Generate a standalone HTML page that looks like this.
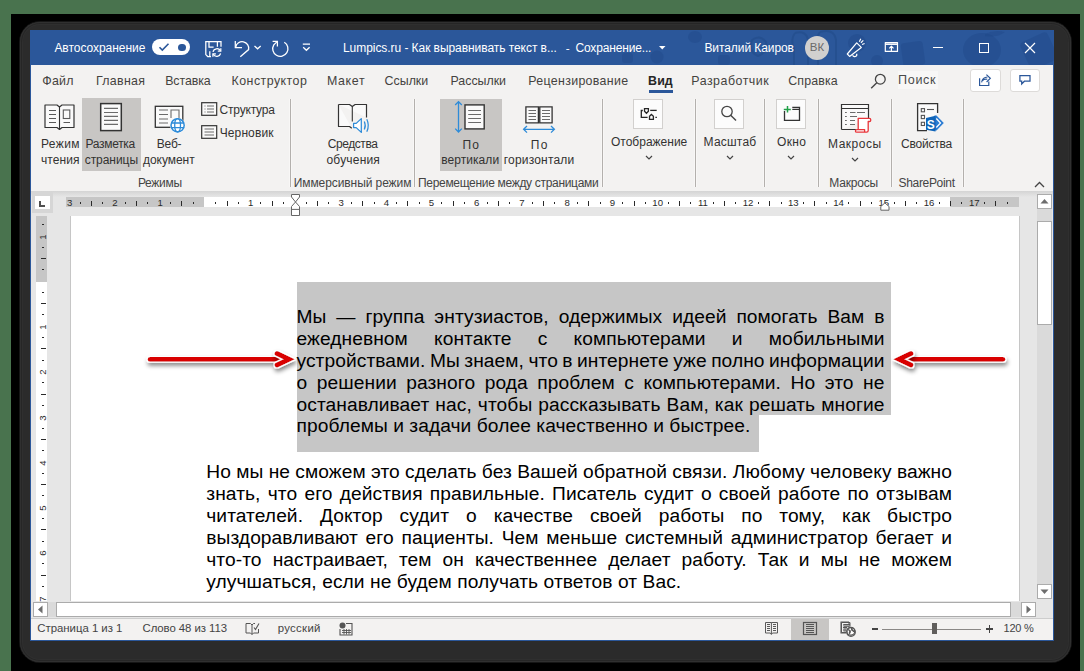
<!DOCTYPE html><html><head><meta charset="utf-8"><style>
html,body{margin:0;padding:0;}
body{width:1084px;height:671px;position:relative;overflow:hidden;background:#49734e;font-family:"Liberation Sans", sans-serif;}
.t{position:absolute;white-space:nowrap;}
.jl{position:absolute;white-space:nowrap;text-align:justify;text-align-last:justify;}
</style></head><body>

<div style="position:absolute;left:11px;top:14px;width:1069px;height:657px;background:#000"></div>
<div style="position:absolute;left:19.5px;top:22px;width:1051.5px;height:640px;background:#2b2b2b;border-radius:20px;box-shadow:inset 0 0 0 1px #303030,inset 0 0 0 2px #262626,inset 0 0 0 3px #2f2f2f,0 0 0 1px #161616"></div>
<div style="position:absolute;left:30px;top:30px;width:1024px;height:611px;background:#2b579a"></div>
<div style="position:absolute;left:31px;top:65px;width:1022px;height:126px;background:#f3f2f1"></div>
<div style="position:absolute;left:31px;top:191px;width:1022px;height:3px;background:linear-gradient(#d6d6d6,#e6e6e6)"></div>
<div style="position:absolute;left:31px;top:194px;width:1022px;height:407px;background:#e6e6e6"></div>
<div style="position:absolute;left:31px;top:618px;width:1022px;height:22px;background:#f3f2f1;border-top:1px solid #cdcdcd;box-sizing:border-box"></div>
<div style="position:absolute;left:31px;top:601px;width:1022px;height:17px;background:#e6e6e6"></div>
<svg style="position:absolute;left:0;top:30px" width="1054" height="35" viewBox="0 30 1054 35"><g fill="#1e4683" fill-opacity="0.35">
<ellipse cx="695" cy="37" rx="7" ry="6"/><circle cx="657" cy="57" r="6.5"/><rect x="622" y="53" width="11" height="10" rx="3"/>
<rect x="718" y="55" width="12" height="10" rx="3"/><circle cx="857" cy="43" r="9"/><circle cx="877" cy="61" r="6"/>
<rect x="902" y="42" width="22" height="24" rx="3" transform="rotate(-8 913 54)"/><ellipse cx="982" cy="50" rx="19" ry="17"/><path d="M985 34 Q995 29 1005 32 Q997 38 985 36 Z"/><rect x="1024" y="36" width="30" height="30" rx="4" transform="rotate(-25 1039 51)"/>
</g><g fill="none" stroke="#1e4683" stroke-opacity="0.4" stroke-width="2">
<path d="M752 40 Q760 34 766 42 Q768 52 758 56 Q748 52 752 40 Z"/><path d="M795 33 Q806 30 808 40 V65 M795 33 Q790 40 794 48 V65"/>
<path d="M820 32 Q834 28 836 40 V65 M820 32 Q814 40 818 48 V65"/>
</g></svg>
<div class="t" style="left:54.40px;top:41.14px;font-size:12px;line-height:14.4px;color:#ffffff;font-weight:normal;letter-spacing:-0.038px">Автосохранение</div>
<div style="position:absolute;left:152px;top:39px;width:38px;height:16px;background:#fff;border-radius:8px"></div>
<svg style="position:absolute;left:158px;top:42px;" width="12" height="10" viewBox="0 0 12 10"><path d="M1.5 5.2 L4.3 8 L10.5 1.8" fill="none" stroke="#2b579a" stroke-width="1.6"/></svg>
<div style="position:absolute;left:178px;top:43.5px;width:7.5px;height:7.5px;background:#2b579a;border-radius:50%"></div>
<svg style="position:absolute;left:0;top:0" width="330" height="66" viewBox="0 0 330 66"><g fill="none" stroke="#fff" stroke-width="1.25">
<path d="M221 46.8 V41.6 H205.8 V54.6 L207.7 56.5 H211"/>
<path d="M209 41.6 V47 H213.6 M217.4 41.6 V46.8 M209.8 51.3 V56.5"/>
<path d="M213 51.8 A4 4 0 0 1 220.4 50.8 M220.6 53.4 A4 4 0 0 1 213.2 54.3"/>
<path d="M220.8 48.2 V51.2 H217.8 M212.9 56.8 V53.8 H215.9"/>
<path d="M235.3 41 V47.5 H242"/>
<path d="M235.7 47 A6.3 6.3 0 0 1 248.6 49.6 L240.3 56.7" stroke-width="1.3"/>
<path d="M254.5 46 L257.6 48.8 L260.7 46"/>
<path d="M284.3 42.2 A7.6 7.6 0 1 1 273.8 44.8 L277.4 41.4" stroke-width="1.3"/>
<path d="M272.6 41.4 H277.4 V46.6"/>
<path d="M302.8 44.2 H310 M303.2 47.2 L306.4 50.3 L309.6 47.2"/>
</g></svg>
<div class="t" style="left:343.00px;top:41.14px;font-size:12px;line-height:14.4px;color:#ffffff;font-weight:normal;letter-spacing:-0.058px">Lumpics.ru - Как выравнивать текст в...</div>
<div class="t" style="left:565.80px;top:41.36px;font-size:11.77px;line-height:14.12px;color:#ffffff;font-weight:normal;">-</div>
<div class="t" style="left:575.40px;top:41.14px;font-size:12px;line-height:14.4px;color:#ffffff;font-weight:normal;letter-spacing:-0.150px">Сохранение...</div>
<svg style="position:absolute;left:658.5px;top:45.5px;" width="7" height="4" viewBox="0 0 7 4"><path d="M0 0 H6.5 L3.25 3.5 Z" fill="#fff"/></svg>
<div class="t" style="left:704.40px;top:41.14px;font-size:12px;line-height:14.4px;color:#ffffff;font-weight:normal;letter-spacing:-0.077px">Виталий Каиров</div>
<div style="position:absolute;left:805px;top:36px;width:24px;height:24px;background:#d1d0cf;border-radius:50%"></div>
<div class="t" style="left:805.00px;top:41.41px;width:24px;text-align:center;font-size:11.5px;line-height:13.8px;color:#6a6a6a;">ВК</div>
<svg style="position:absolute;left:800px;top:30px" width="110" height="35" viewBox="800 30 110 35"><g fill="none" stroke="#fff" stroke-width="1.2" stroke-linejoin="round">
<path d="M847.3 54 L856.7 42.8 L861.3 47.4 L849.6 56.4 Z"/>
<path d="M852.6 55.3 A2.1 2.1 0 0 0 856.6 53.7"/>
<path d="M859.3 41.8 L860.8 38.8 M862 44.5 L864.6 43.5 M860.9 42.7 L863.3 40.4"/>
<rect x="885.3" y="42.6" width="12.2" height="8.8"/>
<path d="M885.3 44.2 H897.5" stroke-width="1.5"/>
<path d="M891.4 51.4 V46.3 M889.3 48.3 L891.4 46.2 L893.5 48.3"/>
</g></svg>
<div style="position:absolute;left:933px;top:47px;width:10px;height:1px;background:#fff"></div>
<div style="position:absolute;left:979px;top:42.5px;width:10px;height:10px;border:1px solid #fff;box-sizing:border-box"></div>
<svg style="position:absolute;left:1024px;top:42px;" width="12" height="12" viewBox="0 0 12 12"><path d="M1 1 L11 11 M11 1 L1 11" stroke="#fff" stroke-width="1.2"/></svg>
<div class="t" style="left:42.30px;top:73.86px;font-size:12.4px;line-height:14.88px;color:#444240;font-weight:normal;letter-spacing:0.233px">Файл</div>
<div class="t" style="left:96.00px;top:73.86px;font-size:12.4px;line-height:14.88px;color:#444240;font-weight:normal;letter-spacing:0.300px">Главная</div>
<div class="t" style="left:165.20px;top:73.86px;font-size:12.4px;line-height:14.88px;color:#444240;font-weight:normal;letter-spacing:-0.083px">Вставка</div>
<div class="t" style="left:231.60px;top:73.86px;font-size:12.4px;line-height:14.88px;color:#444240;font-weight:normal;letter-spacing:0.460px">Конструктор</div>
<div class="t" style="left:327.00px;top:73.86px;font-size:12.4px;line-height:14.88px;color:#444240;font-weight:normal;letter-spacing:0.625px">Макет</div>
<div class="t" style="left:384.60px;top:73.86px;font-size:12.4px;line-height:14.88px;color:#444240;font-weight:normal;letter-spacing:0.000px">Ссылки</div>
<div class="t" style="left:450.50px;top:73.86px;font-size:12.4px;line-height:14.88px;color:#444240;font-weight:normal;letter-spacing:-0.014px">Рассылки</div>
<div class="t" style="left:528.30px;top:73.86px;font-size:12.4px;line-height:14.88px;color:#444240;font-weight:normal;letter-spacing:0.315px">Рецензирование</div>
<div class="t" style="left:691.30px;top:73.86px;font-size:12.4px;line-height:14.88px;color:#444240;font-weight:normal;letter-spacing:0.510px">Разработчик</div>
<div class="t" style="left:788.30px;top:73.86px;font-size:12.4px;line-height:14.88px;color:#444240;font-weight:normal;letter-spacing:0.117px">Справка</div>
<div class="t" style="left:648.10px;top:73.86px;font-size:12.4px;line-height:14.88px;color:#262626;font-weight:bold;letter-spacing:0.100px">Вид</div>
<div style="position:absolute;left:649px;top:90px;width:24px;height:3px;background:#2b579a"></div>
<svg style="position:absolute;left:870px;top:73px;" width="17" height="16" viewBox="0 0 17 16"><circle cx="10.3" cy="6.2" r="4.9" fill="none" stroke="#444" stroke-width="1.3"/><path d="M6.8 9.7 L1.2 15.2" stroke="#444" stroke-width="1.4"/></svg>
<div style="position:absolute;left:898px;top:71px;width:40px;height:18px;background:#f8f7f6"></div>
<div class="t" style="left:898.00px;top:73.37px;font-size:12.6px;line-height:15.12px;color:#4a4a4a;font-weight:normal;letter-spacing:0.675px">Поиск</div>
<div style="position:absolute;left:970px;top:68.5px;width:30.5px;height:23px;background:#fff;border:1px solid #dddbd9;border-radius:3px;box-sizing:border-box"></div>
<div style="position:absolute;left:1009.5px;top:68.5px;width:30.5px;height:23px;background:#fff;border:1px solid #dddbd9;border-radius:3px;box-sizing:border-box"></div>
<svg style="position:absolute;left:970px;top:68px" width="75" height="24" viewBox="970 68 75 24"><g fill="none" stroke="#2b579a" stroke-width="1.2"><path d="M979.6 78.3 V85.5 H988.8 V81.6"/><path d="M981.6 82.3 Q982.5 77.3 987.5 77 M982.5 80.8 Q984 78.7 987.3 79.2" stroke-width="1.1"/><path d="M986.4 74.6 L990.3 78.3 L986.6 82" stroke-width="1.2"/></g><g fill="none" stroke="#2b579a" stroke-width="1.25" stroke-linejoin="miter"><path d="M1019.9 75.6 H1030 V81.2 H1024.4 L1021.7 84 V81.2 H1019.9 Z"/></g></svg>
<div style="position:absolute;left:289px;top:99px;width:3px;height:88px;background:linear-gradient(90deg,#f8f7f6 0,#f8f7f6 33%,#b3b0ad 33%,#b3b0ad 67%,#f8f7f6 67%)"></div>
<div style="position:absolute;left:413px;top:99px;width:3px;height:88px;background:linear-gradient(90deg,#f8f7f6 0,#f8f7f6 33%,#b3b0ad 33%,#b3b0ad 67%,#f8f7f6 67%)"></div>
<div style="position:absolute;left:601px;top:99px;width:3px;height:88px;background:linear-gradient(90deg,#f8f7f6 0,#f8f7f6 33%,#b3b0ad 33%,#b3b0ad 67%,#f8f7f6 67%)"></div>
<div style="position:absolute;left:694px;top:99px;width:3px;height:88px;background:linear-gradient(90deg,#f8f7f6 0,#f8f7f6 33%,#b3b0ad 33%,#b3b0ad 67%,#f8f7f6 67%)"></div>
<div style="position:absolute;left:763px;top:99px;width:3px;height:88px;background:linear-gradient(90deg,#f8f7f6 0,#f8f7f6 33%,#b3b0ad 33%,#b3b0ad 67%,#f8f7f6 67%)"></div>
<div style="position:absolute;left:817px;top:99px;width:3px;height:88px;background:linear-gradient(90deg,#f8f7f6 0,#f8f7f6 33%,#b3b0ad 33%,#b3b0ad 67%,#f8f7f6 67%)"></div>
<div style="position:absolute;left:890px;top:99px;width:3px;height:88px;background:linear-gradient(90deg,#f8f7f6 0,#f8f7f6 33%,#b3b0ad 33%,#b3b0ad 67%,#f8f7f6 67%)"></div>
<div style="position:absolute;left:962px;top:99px;width:3px;height:88px;background:linear-gradient(90deg,#f8f7f6 0,#f8f7f6 33%,#b3b0ad 33%,#b3b0ad 67%,#f8f7f6 67%)"></div>
<div style="position:absolute;left:82px;top:98px;width:59px;height:73px;background:#c8c6c4"></div>
<div style="position:absolute;left:440px;top:98.5px;width:62px;height:72.5px;background:#c8c6c4"></div>
<svg style="position:absolute;left:44px;top:104px;" width="31" height="27" viewBox="0 0 31 27"><path d="M1 1 H13 L15.5 3 L18 1 H30 V23.5 H18 L15.5 25.5 L13 23.5 H1 Z" fill="#fafafa" stroke="#333" stroke-width="1.2" stroke-linejoin="round"/><path d="M15.5 3 V25" stroke="#333" stroke-width="1.1"/><path d="M5 6.5 H12 M5 10.5 H12 M5 14.5 H12 M5 18.5 H12 M19.5 18.5 H26" stroke="#5a5a5a" stroke-width="1.1"/><rect x="19.3" y="6" width="6.5" height="8.5" fill="none" stroke="#5a5a5a" stroke-width="1.1"/></svg>
<div class="t" style="left:40.90px;top:137.14px;font-size:12px;line-height:14.4px;color:#333231;font-weight:normal;letter-spacing:0.425px">Режим</div>
<div class="t" style="left:40.90px;top:152.84px;font-size:12px;line-height:14.4px;color:#333231;font-weight:normal;letter-spacing:0.100px">чтения</div>
<svg style="position:absolute;left:99px;top:102px;" width="24" height="30" viewBox="0 0 24 30"><rect x="1.7" y="1.6" width="20.6" height="27" fill="#fafafa" stroke="#333" stroke-width="1.5"/><path d="M5 6.4 H19 M5 10.5 H19 M5 14.4 H19 M5 18.4 H19 M5 22.4 H19" stroke="#6b6b6b" stroke-width="1.1"/></svg>
<div class="t" style="left:85.50px;top:137.14px;font-size:12px;line-height:14.4px;color:#333231;font-weight:normal;letter-spacing:-0.300px">Разметка</div>
<div class="t" style="left:84.70px;top:152.84px;font-size:12px;line-height:14.4px;color:#333231;font-weight:normal;letter-spacing:-0.043px">страницы</div>
<svg style="position:absolute;left:154px;top:105px;" width="32" height="30" viewBox="0 0 32 30"><rect x="1.3" y="1.3" width="27.5" height="21" fill="#fafafa" stroke="#333" stroke-width="1.3"/><path d="M5 5 H14 M5 9.5 H14 M5 14 H14 M5 18 H14" stroke="#6b6b6b" stroke-width="1.1"/><path d="M17 13 V5 H25 V13" fill="none" stroke="#6b6b6b" stroke-width="1.1"/><circle cx="23.6" cy="20.3" r="7.6" fill="#fff"/><circle cx="23.6" cy="20.3" r="6.6" fill="none" stroke="#2e8bd8" stroke-width="1.5"/><ellipse cx="23.6" cy="20.3" rx="2.9" ry="6.6" fill="none" stroke="#2e8bd8" stroke-width="1.3"/><path d="M17 18 H30.2 M17 22.6 H30.2" stroke="#2e8bd8" stroke-width="1.3"/></svg>
<div class="t" style="left:156.70px;top:137.14px;font-size:12px;line-height:14.4px;color:#333231;font-weight:normal;letter-spacing:-0.167px">Веб-</div>
<div class="t" style="left:143.00px;top:152.84px;font-size:12px;line-height:14.4px;color:#333231;font-weight:normal;letter-spacing:-0.043px">документ</div>
<svg style="position:absolute;left:201px;top:102px;" width="17" height="15" viewBox="0 0 17 15"><rect x="0.7" y="0.7" width="15" height="12.6" fill="#fafafa" stroke="#333" stroke-width="1.2"/><path d="M3.5 4 H4.5 M3.5 7 H4.5 M3.5 10 H4.5 M6 4 H13 M6 7 H13 M6 10 H13" stroke="#6b6b6b" stroke-width="1.1"/></svg>
<div class="t" style="left:219.60px;top:103.04px;font-size:12px;line-height:14.4px;color:#333231;font-weight:normal;letter-spacing:-0.200px">Структура</div>
<svg style="position:absolute;left:201px;top:125px;" width="17" height="15" viewBox="0 0 17 15"><rect x="0.7" y="0.7" width="15" height="12.6" fill="#fafafa" stroke="#333" stroke-width="1.2"/><path d="M3.5 4 H13 M3.5 7 H13 M3.5 10 H13" stroke="#6b6b6b" stroke-width="1.1"/></svg>
<div class="t" style="left:219.70px;top:125.84px;font-size:12px;line-height:14.4px;color:#333231;font-weight:normal;letter-spacing:0.114px">Черновик</div>
<div class="t" style="left:137.90px;top:175.94px;font-size:12px;line-height:14.4px;color:#444;font-weight:normal;letter-spacing:-0.280px">Режимы</div>
<svg style="position:absolute;left:330px;top:98px" width="45" height="40" viewBox="330 98 45 40"><path d="M338.5 104.5 H349.5 L352.3 106.6 L355.1 104.5 H366.5 V117.5 M338.5 104.5 V126.5 H349.5 L351.8 128.3" fill="#fafafa" stroke="#333" stroke-width="1.2" stroke-linejoin="round"/><path d="M352.3 106.6 V121.5" stroke="#333" stroke-width="1.1"/><path d="M353.6 123.4 H356.2 L361.3 118.6 V132.4 L356.2 127.6 H353.6 Z" fill="#fff" stroke="#2e8bd8" stroke-width="1.25" stroke-linejoin="round"/><path d="M364.3 121.5 Q366.2 125.5 364.3 129.5 M366.8 119.3 Q369.8 125.5 366.8 131.7" fill="none" stroke="#2e8bd8" stroke-width="1.2"/></svg>
<div class="t" style="left:327.80px;top:137.14px;font-size:12px;line-height:14.4px;color:#333231;font-weight:normal;letter-spacing:-0.443px">Средства</div>
<div class="t" style="left:326.50px;top:152.84px;font-size:12px;line-height:14.4px;color:#333231;font-weight:normal;letter-spacing:0.186px">обучения</div>
<div class="t" style="left:293.70px;top:175.94px;font-size:12px;line-height:14.4px;color:#444;font-weight:normal;letter-spacing:-0.081px">Иммерсивный режим</div>
<svg style="position:absolute;left:445px;top:98px" width="50" height="38" viewBox="445 98 50 38"><path d="M458.5 101.8 V131.8 M455.2 105 L458.5 101.6 L461.8 105 M455.2 128.6 L458.5 132 L461.8 128.6" fill="none" stroke="#2e8bd8" stroke-width="1.3"/><rect x="465" y="104.9" width="19.2" height="24" fill="#fafafa" stroke="#333" stroke-width="1.4"/><path d="M468.2 110.5 H481 M468.2 114.5 H481 M468.2 118.5 H481 M468.2 122.5 H481" stroke="#6b6b6b" stroke-width="1.1"/></svg>
<div class="t" style="left:462.40px;top:137.84px;font-size:12px;line-height:14.4px;color:#333231;font-weight:normal;letter-spacing:1.300px">По</div>
<div class="t" style="left:441.20px;top:153.44px;font-size:12px;line-height:14.4px;color:#333231;font-weight:normal;letter-spacing:0.062px">вертикали</div>
<svg style="position:absolute;left:518px;top:100px" width="42" height="36" viewBox="518 100 42 36"><path d="M525.9 106.9 H538.4 V122.9 H525.9 Z M539.8 106.9 H552.1 V122.9 H539.8 Z" fill="#fafafa" stroke="#333" stroke-width="1.3"/><path d="M528.5 110.5 H536 M528.5 113.5 H536 M528.5 116.5 H536 M528.5 119.5 H536 M542 110.5 H550 M542 113.5 H550 M542 116.5 H550 M542 119.5 H550" stroke="#6b6b6b" stroke-width="1"/><path d="M523.8 129.3 H554.2 M527 126 L523.6 129.3 L527 132.6 M551 126 L554.4 129.3 L551 132.6" fill="none" stroke="#2e8bd8" stroke-width="1.3"/></svg>
<div class="t" style="left:530.70px;top:137.84px;font-size:12px;line-height:14.4px;color:#333231;font-weight:normal;letter-spacing:1.500px">По</div>
<div class="t" style="left:503.80px;top:153.44px;font-size:12px;line-height:14.4px;color:#333231;font-weight:normal;letter-spacing:0.180px">горизонтали</div>
<div class="t" style="left:418.00px;top:175.94px;font-size:12px;line-height:14.4px;color:#444;font-weight:normal;letter-spacing:-0.315px">Перемещение между страницами</div>
<div style="position:absolute;left:633px;top:99px;width:30px;height:30px;background:#fcfcfc;border:1px solid #d2d0ce;box-sizing:border-box"></div>
<svg style="position:absolute;left:633px;top:99px;" width="30" height="30" viewBox="0 0 30 30"><g fill="none" stroke="#262626" stroke-width="1.3"><path d="M9.8 11.5 H8.3 V18.3 H14.6"/><path d="M11.5 9.6 H15.4 V12.3 L13.45 14.3 L11.5 12.3 Z"/><path d="M17.2 11.4 H23.7"/><path d="M16.5 20.4 V17.3 L18.4 15.5 L20.4 17.3 V20.4 Z"/><path d="M22.4 18.3 H23.9"/></g></svg>
<div class="t" style="left:611.00px;top:134.84px;font-size:12px;line-height:14.4px;color:#333231;font-weight:normal;letter-spacing:0.000px">Отображение</div>
<svg style="position:absolute;left:645px;top:155px;" width="8" height="5" viewBox="0 0 8 5"><path d="M1 1 L4 4 L7 1" fill="none" stroke="#444" stroke-width="1.2"/></svg>
<div style="position:absolute;left:714px;top:99px;width:30px;height:30px;background:#fcfcfc;border:1px solid #d2d0ce;box-sizing:border-box"></div>
<svg style="position:absolute;left:714px;top:99px;" width="30" height="30" viewBox="0 0 30 30"><circle cx="13" cy="12.5" r="5.2" fill="none" stroke="#444" stroke-width="1.3"/><path d="M16.7 16.2 L22 21.5" stroke="#444" stroke-width="1.4"/></svg>
<div class="t" style="left:703.60px;top:134.84px;font-size:12px;line-height:14.4px;color:#333231;font-weight:normal;letter-spacing:0.200px">Масштаб</div>
<svg style="position:absolute;left:726px;top:155px;" width="8" height="5" viewBox="0 0 8 5"><path d="M1 1 L4 4 L7 1" fill="none" stroke="#444" stroke-width="1.2"/></svg>
<div style="position:absolute;left:776px;top:99px;width:30px;height:30px;background:#fcfcfc;border:1px solid #d2d0ce;box-sizing:border-box"></div>
<svg style="position:absolute;left:776px;top:99px;" width="30" height="30" viewBox="0 0 30 30"><g fill="none" stroke="#333" stroke-width="1.3"><path d="M8.5 12.1 V21.4 H23.5 V8.3 H16.3 M16.3 10.4 H23.5"/></g><path d="M11.5 6.9 V13.6 M7.8 10.4 H14.8" stroke="#21a148" stroke-width="1.5"/></svg>
<div class="t" style="left:777.00px;top:134.84px;font-size:12px;line-height:14.4px;color:#333231;font-weight:normal;letter-spacing:0.333px">Окно</div>
<svg style="position:absolute;left:787px;top:155px;" width="8" height="5" viewBox="0 0 8 5"><path d="M1 1 L4 4 L7 1" fill="none" stroke="#444" stroke-width="1.2"/></svg>
<svg style="position:absolute;left:835px;top:100px" width="40" height="36" viewBox="835 100 40 36"><path d="M841.5 129.5 V104.5 H868.5 V118 M841.5 129.5 H856" fill="#fafafa" stroke="#333" stroke-width="1.2"/><path d="M841.5 108.5 H868.5" stroke="#333" stroke-width="1"/><path d="M845 112.5 H846.8 M850 112.5 H855.5 M857 112.5 H865 M845 116.5 H846.8 M850 116.5 H857 M845 120.5 H846.8 M850 120.5 H855 M845 124.5 H846.8 M850 124.5 H855" stroke="#6b6b6b" stroke-width="1.1"/><path d="M858.2 130 V118.3 H869.3 Q870.8 118.3 870.8 119.9 Q870.8 121.5 869.3 121.5 H868.2 V130.6 Q868.2 132.2 866.6 132.2 H856.9 Q855.4 132.2 855.4 130.9 Q855.4 129.6 856.9 129.6 H864.6 V132" fill="#fff" stroke="#e8353a" stroke-width="1.3" stroke-linejoin="round"/></svg>
<div class="t" style="left:828.00px;top:137.04px;font-size:12px;line-height:14.4px;color:#333231;font-weight:normal;letter-spacing:0.500px">Макросы</div>
<svg style="position:absolute;left:851px;top:157px;" width="8" height="5" viewBox="0 0 8 5"><path d="M1 1 L4 4 L7 1" fill="none" stroke="#444" stroke-width="1.2"/></svg>
<div class="t" style="left:829.30px;top:175.64px;font-size:12px;line-height:14.4px;color:#444;font-weight:normal;letter-spacing:-0.183px">Макросы</div>
<svg style="position:absolute;left:912px;top:100px" width="36" height="36" viewBox="912 100 36 36"><path d="M937.6 113 V103.7 H917.6 V130.6 H927" fill="#fafafa" stroke="#333" stroke-width="1.3"/><g fill="none" stroke="#555" stroke-width="1.1"><rect x="921.3" y="108.6" width="3.2" height="3.2"/><rect x="921.3" y="115.4" width="3.2" height="3.2"/><rect x="921.3" y="122.3" width="3.2" height="3.2"/><path d="M927 109.5 H934"/></g><path d="M934.5 115.5 H936.5 L943.8 123 L936.5 130.6 H934.5 Z" fill="#2b7cd3"/><path d="M936.3 118.5 L940.5 123 L936.3 127.5" fill="none" stroke="#fff" stroke-width="1.2"/><path d="M926 118 L935.5 115.8 V131.4 L926 129.8 Z" fill="#0f64b8"/><text x="930.8" y="128.8" font-family="Liberation Sans" font-weight="bold" font-size="12" fill="#fff" text-anchor="middle">S</text></svg>
<div class="t" style="left:901.00px;top:136.84px;font-size:12px;line-height:14.4px;color:#333231;font-weight:normal;letter-spacing:-0.200px">Свойства</div>
<div class="t" style="left:898.50px;top:175.94px;font-size:12px;line-height:14.4px;color:#444;font-weight:normal;letter-spacing:-0.322px">SharePoint</div>
<svg style="position:absolute;left:1034px;top:181px;" width="11" height="7" viewBox="0 0 11 7"><path d="M1 6 L5.5 1.5 L10 6" fill="none" stroke="#444" stroke-width="1.3"/></svg>
<div style="position:absolute;left:31px;top:191px;width:1022px;height:6px;background:linear-gradient(#d4d4d4,#e6e6e6)"></div>
<div style="position:absolute;left:66px;top:196.7px;width:953px;height:10.3px;background:#fff"></div>
<div style="position:absolute;left:66px;top:196.7px;width:138.2px;height:10.3px;background:#c6c6c6"></div>
<div style="position:absolute;left:949.5px;top:196.7px;width:69.5px;height:10.3px;background:#c6c6c6"></div>
<div class="t" style="left:57.72px;top:197.01px;width:24px;text-align:center;font-size:9.6px;line-height:11.52px;color:#2a2a2a;">3</div>
<div style="position:absolute;left:79.5px;top:202px;width:1.1px;height:2px;background:#2a2a2a"></div>
<div style="position:absolute;left:102.1px;top:202px;width:1.1px;height:2px;background:#2a2a2a"></div>
<div style="position:absolute;left:90.8px;top:201px;width:1.1px;height:5px;background:#2a2a2a"></div>
<div class="t" style="left:102.95px;top:197.01px;width:24px;text-align:center;font-size:9.6px;line-height:11.52px;color:#2a2a2a;">2</div>
<div style="position:absolute;left:124.8px;top:202px;width:1.1px;height:2px;background:#2a2a2a"></div>
<div style="position:absolute;left:147.4px;top:202px;width:1.1px;height:2px;background:#2a2a2a"></div>
<div style="position:absolute;left:136.1px;top:201px;width:1.1px;height:5px;background:#2a2a2a"></div>
<div class="t" style="left:148.18px;top:197.01px;width:24px;text-align:center;font-size:9.6px;line-height:11.52px;color:#2a2a2a;">1</div>
<div style="position:absolute;left:170.0px;top:202px;width:1.1px;height:2px;background:#2a2a2a"></div>
<div style="position:absolute;left:192.6px;top:202px;width:1.1px;height:2px;background:#2a2a2a"></div>
<div style="position:absolute;left:181.3px;top:201px;width:1.1px;height:5px;background:#2a2a2a"></div>
<div style="position:absolute;left:215.2px;top:202px;width:1.1px;height:2px;background:#2a2a2a"></div>
<div style="position:absolute;left:237.8px;top:202px;width:1.1px;height:2px;background:#2a2a2a"></div>
<div style="position:absolute;left:226.5px;top:201px;width:1.1px;height:5px;background:#2a2a2a"></div>
<div class="t" style="left:238.62px;top:197.01px;width:24px;text-align:center;font-size:9.6px;line-height:11.52px;color:#2a2a2a;">1</div>
<div style="position:absolute;left:260.4px;top:202px;width:1.1px;height:2px;background:#2a2a2a"></div>
<div style="position:absolute;left:283.0px;top:202px;width:1.1px;height:2px;background:#2a2a2a"></div>
<div style="position:absolute;left:271.7px;top:201px;width:1.1px;height:5px;background:#2a2a2a"></div>
<div style="position:absolute;left:305.7px;top:202px;width:1.1px;height:2px;background:#2a2a2a"></div>
<div style="position:absolute;left:328.3px;top:202px;width:1.1px;height:2px;background:#2a2a2a"></div>
<div style="position:absolute;left:317.0px;top:201px;width:1.1px;height:5px;background:#2a2a2a"></div>
<div class="t" style="left:329.08px;top:197.01px;width:24px;text-align:center;font-size:9.6px;line-height:11.52px;color:#2a2a2a;">3</div>
<div style="position:absolute;left:350.9px;top:202px;width:1.1px;height:2px;background:#2a2a2a"></div>
<div style="position:absolute;left:373.5px;top:202px;width:1.1px;height:2px;background:#2a2a2a"></div>
<div style="position:absolute;left:362.2px;top:201px;width:1.1px;height:5px;background:#2a2a2a"></div>
<div class="t" style="left:374.30px;top:197.01px;width:24px;text-align:center;font-size:9.6px;line-height:11.52px;color:#2a2a2a;">4</div>
<div style="position:absolute;left:396.1px;top:202px;width:1.1px;height:2px;background:#2a2a2a"></div>
<div style="position:absolute;left:418.7px;top:202px;width:1.1px;height:2px;background:#2a2a2a"></div>
<div style="position:absolute;left:407.4px;top:201px;width:1.1px;height:5px;background:#2a2a2a"></div>
<div class="t" style="left:419.52px;top:197.01px;width:24px;text-align:center;font-size:9.6px;line-height:11.52px;color:#2a2a2a;">5</div>
<div style="position:absolute;left:441.3px;top:202px;width:1.1px;height:2px;background:#2a2a2a"></div>
<div style="position:absolute;left:463.9px;top:202px;width:1.1px;height:2px;background:#2a2a2a"></div>
<div style="position:absolute;left:452.6px;top:201px;width:1.1px;height:5px;background:#2a2a2a"></div>
<div class="t" style="left:464.75px;top:197.01px;width:24px;text-align:center;font-size:9.6px;line-height:11.52px;color:#2a2a2a;">6</div>
<div style="position:absolute;left:486.6px;top:202px;width:1.1px;height:2px;background:#2a2a2a"></div>
<div style="position:absolute;left:509.2px;top:202px;width:1.1px;height:2px;background:#2a2a2a"></div>
<div style="position:absolute;left:497.9px;top:201px;width:1.1px;height:5px;background:#2a2a2a"></div>
<div class="t" style="left:509.98px;top:197.01px;width:24px;text-align:center;font-size:9.6px;line-height:11.52px;color:#2a2a2a;">7</div>
<div style="position:absolute;left:531.8px;top:202px;width:1.1px;height:2px;background:#2a2a2a"></div>
<div style="position:absolute;left:554.4px;top:202px;width:1.1px;height:2px;background:#2a2a2a"></div>
<div style="position:absolute;left:543.1px;top:201px;width:1.1px;height:5px;background:#2a2a2a"></div>
<div class="t" style="left:555.20px;top:197.01px;width:24px;text-align:center;font-size:9.6px;line-height:11.52px;color:#2a2a2a;">8</div>
<div style="position:absolute;left:577.0px;top:202px;width:1.1px;height:2px;background:#2a2a2a"></div>
<div style="position:absolute;left:599.6px;top:202px;width:1.1px;height:2px;background:#2a2a2a"></div>
<div style="position:absolute;left:588.3px;top:201px;width:1.1px;height:5px;background:#2a2a2a"></div>
<div class="t" style="left:600.43px;top:197.01px;width:24px;text-align:center;font-size:9.6px;line-height:11.52px;color:#2a2a2a;">9</div>
<div style="position:absolute;left:622.2px;top:202px;width:1.1px;height:2px;background:#2a2a2a"></div>
<div style="position:absolute;left:644.8px;top:202px;width:1.1px;height:2px;background:#2a2a2a"></div>
<div style="position:absolute;left:633.5px;top:201px;width:1.1px;height:5px;background:#2a2a2a"></div>
<div class="t" style="left:645.65px;top:197.01px;width:24px;text-align:center;font-size:9.6px;line-height:11.52px;color:#2a2a2a;">10</div>
<div style="position:absolute;left:667.5px;top:202px;width:1.1px;height:2px;background:#2a2a2a"></div>
<div style="position:absolute;left:690.1px;top:202px;width:1.1px;height:2px;background:#2a2a2a"></div>
<div style="position:absolute;left:678.8px;top:201px;width:1.1px;height:5px;background:#2a2a2a"></div>
<div class="t" style="left:690.88px;top:197.01px;width:24px;text-align:center;font-size:9.6px;line-height:11.52px;color:#2a2a2a;">11</div>
<div style="position:absolute;left:712.7px;top:202px;width:1.1px;height:2px;background:#2a2a2a"></div>
<div style="position:absolute;left:735.3px;top:202px;width:1.1px;height:2px;background:#2a2a2a"></div>
<div style="position:absolute;left:724.0px;top:201px;width:1.1px;height:5px;background:#2a2a2a"></div>
<div class="t" style="left:736.10px;top:197.01px;width:24px;text-align:center;font-size:9.6px;line-height:11.52px;color:#2a2a2a;">12</div>
<div style="position:absolute;left:757.9px;top:202px;width:1.1px;height:2px;background:#2a2a2a"></div>
<div style="position:absolute;left:780.5px;top:202px;width:1.1px;height:2px;background:#2a2a2a"></div>
<div style="position:absolute;left:769.2px;top:201px;width:1.1px;height:5px;background:#2a2a2a"></div>
<div class="t" style="left:781.33px;top:197.01px;width:24px;text-align:center;font-size:9.6px;line-height:11.52px;color:#2a2a2a;">13</div>
<div style="position:absolute;left:803.1px;top:202px;width:1.1px;height:2px;background:#2a2a2a"></div>
<div style="position:absolute;left:825.7px;top:202px;width:1.1px;height:2px;background:#2a2a2a"></div>
<div style="position:absolute;left:814.4px;top:201px;width:1.1px;height:5px;background:#2a2a2a"></div>
<div class="t" style="left:826.55px;top:197.01px;width:24px;text-align:center;font-size:9.6px;line-height:11.52px;color:#2a2a2a;">14</div>
<div style="position:absolute;left:848.4px;top:202px;width:1.1px;height:2px;background:#2a2a2a"></div>
<div style="position:absolute;left:871.0px;top:202px;width:1.1px;height:2px;background:#2a2a2a"></div>
<div style="position:absolute;left:859.7px;top:201px;width:1.1px;height:5px;background:#2a2a2a"></div>
<div class="t" style="left:871.77px;top:197.01px;width:24px;text-align:center;font-size:9.6px;line-height:11.52px;color:#2a2a2a;">15</div>
<div style="position:absolute;left:893.6px;top:202px;width:1.1px;height:2px;background:#2a2a2a"></div>
<div style="position:absolute;left:916.2px;top:202px;width:1.1px;height:2px;background:#2a2a2a"></div>
<div style="position:absolute;left:904.9px;top:201px;width:1.1px;height:5px;background:#2a2a2a"></div>
<div class="t" style="left:917.00px;top:197.01px;width:24px;text-align:center;font-size:9.6px;line-height:11.52px;color:#2a2a2a;">16</div>
<div style="position:absolute;left:938.8px;top:202px;width:1.1px;height:2px;background:#2a2a2a"></div>
<div style="position:absolute;left:961.4px;top:202px;width:1.1px;height:2px;background:#2a2a2a"></div>
<div style="position:absolute;left:950.1px;top:201px;width:1.1px;height:5px;background:#2a2a2a"></div>
<div class="t" style="left:962.23px;top:197.01px;width:24px;text-align:center;font-size:9.6px;line-height:11.52px;color:#2a2a2a;">17</div>
<div style="position:absolute;left:984.0px;top:202px;width:1.1px;height:2px;background:#2a2a2a"></div>
<div style="position:absolute;left:1006.6px;top:202px;width:1.1px;height:2px;background:#2a2a2a"></div>
<div style="position:absolute;left:995.3px;top:201px;width:1.1px;height:5px;background:#2a2a2a"></div>
<svg style="position:absolute;left:290px;top:193px;" width="11" height="24" viewBox="0 0 11 24"><path d="M1.5 1.5 H9.5 V4 L5.5 9 L1.5 4 Z" fill="#fff" stroke="#666" stroke-width="1"/><path d="M5.5 9 L1.5 13.5 V22.5 H9.5 V13.5 Z" fill="#fff" stroke="#666" stroke-width="1"/><path d="M1.5 16.4 H9.5" stroke="#666" stroke-width="1"/></svg>
<svg style="position:absolute;left:879.5px;top:201.5px;" width="10" height="9" viewBox="0 0 10 9"><path d="M0.8 8.2 V4.4 L4.9 1 L9 4.4 V8.2 Z" fill="#fff" stroke="#666" stroke-width="1"/></svg>
<div style="position:absolute;left:32px;top:192px;width:21px;height:20.5px;background:#d6d6d6"></div>
<div style="position:absolute;left:34.5px;top:195.6px;width:15.2px;height:13.6px;background:#fff"></div>
<svg style="position:absolute;left:38px;top:200px;" width="8" height="8" viewBox="0 0 8 8"><path d="M2 1 V6 H7" fill="none" stroke="#505050" stroke-width="2"/></svg>
<div style="position:absolute;left:36px;top:216px;width:11px;height:385px;background:#fff"></div>
<div style="position:absolute;left:36px;top:216px;width:11px;height:66px;background:#c6c6c6"></div>
<div style="position:absolute;left:42px;top:224.0px;width:2px;height:1.1px;background:#2a2a2a"></div>
<div class="t" style="left:30.5px;top:229.8px;width:24px;height:14px;line-height:14px;text-align:center;font-size:9.6px;color:#2a2a2a;transform:rotate(-90deg)">1</div>
<div style="position:absolute;left:42px;top:246.6px;width:2px;height:1.1px;background:#2a2a2a"></div>
<div style="position:absolute;left:42px;top:269.2px;width:2px;height:1.1px;background:#2a2a2a"></div>
<div style="position:absolute;left:41px;top:257.9px;width:5px;height:1.1px;background:#2a2a2a"></div>
<div style="position:absolute;left:42px;top:291.8px;width:2px;height:1.1px;background:#2a2a2a"></div>
<div style="position:absolute;left:42px;top:314.4px;width:2px;height:1.1px;background:#2a2a2a"></div>
<div style="position:absolute;left:41px;top:303.1px;width:5px;height:1.1px;background:#2a2a2a"></div>
<div class="t" style="left:30.5px;top:320.2px;width:24px;height:14px;line-height:14px;text-align:center;font-size:9.6px;color:#2a2a2a;transform:rotate(-90deg)">1</div>
<div style="position:absolute;left:42px;top:337.0px;width:2px;height:1.1px;background:#2a2a2a"></div>
<div style="position:absolute;left:42px;top:359.6px;width:2px;height:1.1px;background:#2a2a2a"></div>
<div style="position:absolute;left:41px;top:348.3px;width:5px;height:1.1px;background:#2a2a2a"></div>
<div class="t" style="left:30.5px;top:365.4px;width:24px;height:14px;line-height:14px;text-align:center;font-size:9.6px;color:#2a2a2a;transform:rotate(-90deg)">2</div>
<div style="position:absolute;left:42px;top:382.3px;width:2px;height:1.1px;background:#2a2a2a"></div>
<div style="position:absolute;left:42px;top:404.9px;width:2px;height:1.1px;background:#2a2a2a"></div>
<div style="position:absolute;left:41px;top:393.6px;width:5px;height:1.1px;background:#2a2a2a"></div>
<div class="t" style="left:30.5px;top:410.7px;width:24px;height:14px;line-height:14px;text-align:center;font-size:9.6px;color:#2a2a2a;transform:rotate(-90deg)">3</div>
<div style="position:absolute;left:42px;top:427.5px;width:2px;height:1.1px;background:#2a2a2a"></div>
<div style="position:absolute;left:42px;top:450.1px;width:2px;height:1.1px;background:#2a2a2a"></div>
<div style="position:absolute;left:41px;top:438.8px;width:5px;height:1.1px;background:#2a2a2a"></div>
<div class="t" style="left:30.5px;top:455.9px;width:24px;height:14px;line-height:14px;text-align:center;font-size:9.6px;color:#2a2a2a;transform:rotate(-90deg)">4</div>
<div style="position:absolute;left:42px;top:472.7px;width:2px;height:1.1px;background:#2a2a2a"></div>
<div style="position:absolute;left:42px;top:495.3px;width:2px;height:1.1px;background:#2a2a2a"></div>
<div style="position:absolute;left:41px;top:484.0px;width:5px;height:1.1px;background:#2a2a2a"></div>
<div class="t" style="left:30.5px;top:501.1px;width:24px;height:14px;line-height:14px;text-align:center;font-size:9.6px;color:#2a2a2a;transform:rotate(-90deg)">5</div>
<div style="position:absolute;left:42px;top:517.9px;width:2px;height:1.1px;background:#2a2a2a"></div>
<div style="position:absolute;left:42px;top:540.5px;width:2px;height:1.1px;background:#2a2a2a"></div>
<div style="position:absolute;left:41px;top:529.2px;width:5px;height:1.1px;background:#2a2a2a"></div>
<div class="t" style="left:30.5px;top:546.4px;width:24px;height:14px;line-height:14px;text-align:center;font-size:9.6px;color:#2a2a2a;transform:rotate(-90deg)">6</div>
<div style="position:absolute;left:42px;top:563.2px;width:2px;height:1.1px;background:#2a2a2a"></div>
<div style="position:absolute;left:42px;top:585.8px;width:2px;height:1.1px;background:#2a2a2a"></div>
<div style="position:absolute;left:41px;top:574.5px;width:5px;height:1.1px;background:#2a2a2a"></div>
<div class="t" style="left:30.5px;top:591.6px;width:24px;height:14px;line-height:14px;text-align:center;font-size:9.6px;color:#2a2a2a;transform:rotate(-90deg)">7</div>
<div style="position:absolute;left:70px;top:216px;width:950px;height:385px;background:#fff;border-left:1px solid #c6c6c6;border-right:1px solid #c6c6c6;box-sizing:border-box"></div>
<div style="position:absolute;left:1037px;top:194px;width:15px;height:15px;background:#fff;border:1px solid #ababab;box-sizing:border-box"></div>
<svg style="position:absolute;left:1040px;top:198px;" width="9" height="6" viewBox="0 0 9 6"><path d="M0.5 5.5 L4.5 1 L8.5 5.5 Z" fill="#6d6d6d"/></svg>
<div style="position:absolute;left:1037px;top:209px;width:15px;height:375px;background:#dadada"></div>
<div style="position:absolute;left:1037px;top:221px;width:15px;height:104px;background:#fff;border:1px solid #ababab;box-sizing:border-box"></div>
<div style="position:absolute;left:1037px;top:584px;width:15px;height:15px;background:#fff;border:1px solid #ababab;box-sizing:border-box"></div>
<svg style="position:absolute;left:1040px;top:589px;" width="9" height="6" viewBox="0 0 9 6"><path d="M0.5 0.5 L4.5 5 L8.5 0.5 Z" fill="#6d6d6d"/></svg>
<div style="position:absolute;left:33px;top:602px;width:15px;height:15px;background:#fff;border:1px solid #ababab;box-sizing:border-box"></div>
<svg style="position:absolute;left:37px;top:605px;" width="6" height="9" viewBox="0 0 6 9"><path d="M5.5 0.5 L1 4.5 L5.5 8.5 Z" fill="#6d6d6d"/></svg>
<div style="position:absolute;left:48px;top:602px;width:973px;height:15px;background:#dadada"></div>
<div style="position:absolute;left:56px;top:602px;width:955px;height:15px;background:#fff;border:1px solid #ababab;box-sizing:border-box"></div>
<div style="position:absolute;left:1021px;top:602px;width:15px;height:15px;background:#fff;border:1px solid #ababab;box-sizing:border-box"></div>
<svg style="position:absolute;left:1026px;top:605px;" width="6" height="9" viewBox="0 0 6 9"><path d="M0.5 0.5 L5 4.5 L0.5 8.5 Z" fill="#6d6d6d"/></svg>
<div style="position:absolute;left:297px;top:282px;width:594px;height:133px;background:#c6c6c6"></div>
<div style="position:absolute;left:297px;top:415px;width:462px;height:36.5px;background:#c6c6c6"></div>
<div class="t" style="left:296.5px;top:306.14px;font-size:19.2px;line-height:21.8px;color:#000;letter-spacing:0.07px;word-spacing:4.527px">Мы — группа энтузиастов, одержимых идеей помогать Вам в</div>
<div class="t" style="left:296.5px;top:327.98px;font-size:19.2px;line-height:21.8px;color:#000;letter-spacing:0.07px;word-spacing:20.744px">ежедневном контакте с компьютерами и мобильными</div>
<div class="t" style="left:296.5px;top:349.82px;font-size:19.2px;line-height:21.8px;color:#000;letter-spacing:0.07px;word-spacing:-0.959px">устройствами. Мы знаем, что в интернете уже полно информации</div>
<div class="t" style="left:296.5px;top:371.66px;font-size:19.2px;line-height:21.8px;color:#000;letter-spacing:0.07px;word-spacing:4.132px">о решении разного рода проблем с компьютерами. Но это не</div>
<div class="t" style="left:296.5px;top:393.50px;font-size:19.2px;line-height:21.8px;color:#000;letter-spacing:0.07px;word-spacing:0.636px">останавливает нас, чтобы рассказывать Вам, как решать многие</div>
<div class="t" style="left:296.5px;top:415.34px;font-size:19.2px;line-height:21.8px;color:#000;letter-spacing:0.07px;word-spacing:0.000px">проблемы и задачи более качественно и быстрее.</div>
<div class="t" style="left:206.3px;top:461.44px;font-size:19.2px;line-height:21.8px;color:#000;letter-spacing:0.07px;word-spacing:-0.125px">Но мы не сможем это сделать без Вашей обратной связи. Любому человеку важно</div>
<div class="t" style="left:206.3px;top:483.34px;font-size:19.2px;line-height:21.8px;color:#000;letter-spacing:0.07px;word-spacing:1.842px">знать, что его действия правильные. Писатель судит о своей работе по отзывам</div>
<div class="t" style="left:206.3px;top:505.24px;font-size:19.2px;line-height:21.8px;color:#000;letter-spacing:0.07px;word-spacing:11.465px">читателей. Доктор судит о качестве своей работы по тому, как быстро</div>
<div class="t" style="left:206.3px;top:527.14px;font-size:19.2px;line-height:21.8px;color:#000;letter-spacing:0.07px;word-spacing:2.293px">выздоравливают его пациенты. Чем меньше системный администратор бегает и</div>
<div class="t" style="left:206.3px;top:549.04px;font-size:19.2px;line-height:21.8px;color:#000;letter-spacing:0.07px;word-spacing:5.638px">что-то настраивает, тем он качественнее делает работу. Так и мы не можем</div>
<div class="t" style="left:206.3px;top:570.94px;font-size:19.2px;line-height:21.8px;color:#000;letter-spacing:0.07px;word-spacing:0.000px">улучшаться, если не будем получать ответов от Вас.</div>
<svg style="position:absolute;left:130px;top:340px;" width="170" height="40" viewBox="0 0 170 40"><defs><filter id="F130" filterUnits="userSpaceOnUse" x="0" y="0" width="200" height="40">
<feMorphology in="SourceAlpha" operator="dilate" radius="1.2" result="d"/>
<feFlood flood-color="#fff"/><feComposite in2="d" operator="in" result="w"/>
<feGaussianBlur in="d" stdDeviation="2.1" result="b"/><feOffset in="b" dx="1" dy="2.6" result="o"/>
<feFlood flood-color="#000" flood-opacity="0.45"/><feComposite in2="o" operator="in" result="s"/>
<feMerge><feMergeNode in="s"/><feMergeNode in="w"/><feMergeNode in="SourceGraphic"/></feMerge></filter></defs><g filter="url(#F130)" fill="none" stroke="#d90000" stroke-width="4.8" stroke-linecap="round"><path d="M20 19.4 H150"/></g><g filter="url(#F130)" fill="none" stroke="#d90000" stroke-width="5" stroke-linecap="round"><path d="M147 13.6 L159 19.3 L147 25" stroke-linejoin="miter" stroke-miterlimit="10"/></g></svg>
<svg style="position:absolute;left:885px;top:340px;" width="140" height="40" viewBox="0 0 140 40"><defs><filter id="F885" filterUnits="userSpaceOnUse" x="0" y="0" width="200" height="40">
<feMorphology in="SourceAlpha" operator="dilate" radius="1.2" result="d"/>
<feFlood flood-color="#fff"/><feComposite in2="d" operator="in" result="w"/>
<feGaussianBlur in="d" stdDeviation="2.1" result="b"/><feOffset in="b" dx="1" dy="2.6" result="o"/>
<feFlood flood-color="#000" flood-opacity="0.45"/><feComposite in2="o" operator="in" result="s"/>
<feMerge><feMergeNode in="s"/><feMergeNode in="w"/><feMergeNode in="SourceGraphic"/></feMerge></filter></defs><g filter="url(#F885)" fill="none" stroke="#d90000" stroke-width="4.8" stroke-linecap="round"><path d="M118 19.3 H20"/></g><g filter="url(#F885)" fill="none" stroke="#d90000" stroke-width="5" stroke-linecap="round"><path d="M26 13.6 L14 19.3 L26 25" stroke-linejoin="miter" stroke-miterlimit="10"/></g></svg>
<div class="t" style="left:37.30px;top:621.71px;font-size:11.4px;line-height:13.68px;color:#444;font-weight:normal;letter-spacing:-0.021px">Страница 1 из 1</div>
<div class="t" style="left:142.50px;top:621.71px;font-size:11.4px;line-height:13.68px;color:#444;font-weight:normal;letter-spacing:-0.071px">Слово 48 из 113</div>
<svg style="position:absolute;left:245px;top:622px;" width="15" height="14" viewBox="0 0 15 14"><path d="M1 1.5 H5.5 L7 3 V12.5 L5.5 11 H1 Z M7 3 L8.5 1.5 H10" fill="none" stroke="#555" stroke-width="1"/><path d="M7 12.5 L8.5 11 H13.5 V7" fill="none" stroke="#555" stroke-width="1"/><path d="M9 5.5 L10.5 7.5 L14 1.5" fill="none" stroke="#555" stroke-width="1.1"/></svg>
<div class="t" style="left:277.70px;top:621.71px;font-size:11.4px;line-height:13.68px;color:#444;font-weight:normal;letter-spacing:0.317px">русский</div>
<svg style="position:absolute;left:339px;top:622px;" width="14" height="14" viewBox="0 0 14 14"><circle cx="3.5" cy="3.5" r="3" fill="#555"/><path d="M7 1.5 H13 V13 H1 V7" fill="none" stroke="#555" stroke-width="1.1"/><path d="M3 8.5 H12 M3 10.5 H12 M5 7 V12.5 M7.5 7 V12.5 M10 7 V12.5" stroke="#555" stroke-width="0.9"/></svg>
<svg style="position:absolute;left:760px;top:618px" width="100" height="22" viewBox="760 618 100 22"><g fill="none" stroke="#5a5a5a" stroke-width="1"><path d="M765.5 622.5 H771.4 H777.5 V633 H772.5 L771.4 634.5 L770.3 633 H765.5 Z"/><path d="M771.4 622.5 V634 M767 624.5 H770 M767 626.5 H770 M767 628.5 H770 M767 630.5 H770 M773 624.5 H776 M773 626.5 H776 M773 628.5 H776 M773 630.5 H776"/></g></svg>
<div style="position:absolute;left:791px;top:618.5px;width:38px;height:21.5px;background:#c8c6c4"></div>
<svg style="position:absolute;left:800px;top:618px" width="60" height="22" viewBox="800 618 60 22"><g fill="none" stroke="#555"><rect x="803.5" y="622.5" width="13" height="12" stroke-width="1.2"/><path d="M806 624.5 H814 M806 626.5 H814 M806 628.5 H814 M806 630.5 H814 M806 632.5 H814" stroke-width="1"/></g><g fill="none" stroke="#5a5a5a" stroke-width="1"><path d="M850 627 V622.5 H841.5 V632.5 H846"/><path d="M843.5 624.5 H850 M843.5 626.7 H849 M843.5 628.9 H847 M843.5 631 H846"/></g><circle cx="850.8" cy="631.2" r="4.8" fill="#f3f2f1"/><circle cx="850.8" cy="631.2" r="3.9" fill="#fff" stroke="#5a5a5a" stroke-width="1.2"/><path d="M848 629.5 L850 630.5 L849.3 633.5 M851.5 627.8 L851.8 630 L854 631" fill="none" stroke="#5a5a5a" stroke-width="1.3"/></svg>
<svg style="position:absolute;left:840px;top:621px;" width="16" height="16" viewBox="0 0 16 16"><path d="M9 1 H1 V12 H6" fill="none" stroke="#555" stroke-width="1.1"/><path d="M3 4 H8 M3 6.5 H7 M3 9 H6" stroke="#555" stroke-width="1"/><path d="M9 1 V6" stroke="#555" stroke-width="1"/><circle cx="11" cy="11" r="4.3" fill="none" stroke="#555" stroke-width="1.2"/><path d="M8.5 9 L10.5 10.5 L9.5 13 M12 7.5 L12.5 10 L14.5 11" fill="none" stroke="#555" stroke-width="1"/></svg>
<div style="position:absolute;left:872px;top:628px;width:6px;height:1.5px;background:#444"></div>
<div style="position:absolute;left:881.7px;top:628.5px;width:99px;height:1px;background:#8a8886"></div>
<div style="position:absolute;left:931.8px;top:622.8px;width:5.2px;height:11.2px;background:#605e5c"></div>
<div style="position:absolute;left:985.6px;top:628px;width:7.5px;height:1.5px;background:#444"></div>
<div style="position:absolute;left:988.6px;top:625px;width:1.5px;height:7.5px;background:#444"></div>
<div class="t" style="left:1003.50px;top:621.59px;font-size:11px;line-height:13.2px;color:#444;font-weight:normal;letter-spacing:-0.225px">120 %</div>
</body></html>
